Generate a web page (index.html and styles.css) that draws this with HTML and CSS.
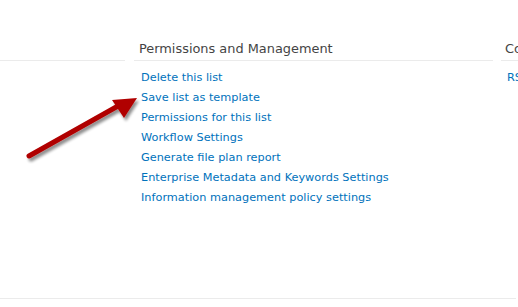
FILE: index.html
```html
<!DOCTYPE html>
<html lang="en">
<head>
    <meta charset="UTF-8">
    <title>List Settings</title>
    <link rel="stylesheet" href="styles.css">
</head>
<body>
    <div class="settings">
        <div class="section section-left">
            <h3 class="section-title">&nbsp;</h3>
        </div>

        <div class="section section-main">
            <h3 class="section-title">Permissions and Management</h3>
            <ul class="link-list">
                <li><a href="#">Delete this list</a></li>
                <li><a href="#">Save list as template</a></li>
                <li><a href="#">Permissions for this list</a></li>
                <li><a href="#">Workflow Settings</a></li>
                <li><a href="#">Generate file plan report</a></li>
                <li><a href="#">Enterprise Metadata and Keywords Settings</a></li>
                <li><a href="#">Information management policy settings</a></li>
            </ul>
        </div>

        <div class="section section-right">
            <h3 class="section-title">Communications</h3>
            <ul class="link-list">
                <li><a href="#">RSS settings</a></li>
            </ul>
        </div>
    </div>

    <div class="footer-rule"></div>

    <!-- callout arrow pointing at "Save list as template" -->
    <svg class="callout-arrow" width="160" height="180" viewBox="0 0 160 180">
        <defs>
            <filter id="arrow-shadow" x="-20%" y="-20%" width="140%" height="140%">
                <feGaussianBlur in="SourceAlpha" stdDeviation="1.6"/>
                <feOffset dx="2" dy="3"/>
                <feComponentTransfer><feFuncA type="linear" slope="0.45"/></feComponentTransfer>
                <feMerge><feMergeNode/><feMergeNode in="SourceGraphic"/></feMerge>
            </filter>
        </defs>
        <g filter="url(#arrow-shadow)" fill="#b00000">
            <line x1="29" y1="156" x2="118" y2="106" stroke="#b00000" stroke-width="5" stroke-linecap="round"/>
            <polygon points="137,98 112,100 124,118"/>
        </g>
    </svg>
</body>
</html>
```

FILE: styles.css
```css
* {
    margin: 0;
    padding: 0;
    box-sizing: border-box;
}

body {
    font-family: "DejaVu Sans", Verdana, sans-serif;
    background: #fff;
    width: 518px;
    height: 307px;
    overflow: hidden;
    position: relative;
}

.settings {
    display: flex;
    gap: 0 9px;
    padding-top: 38px;
}

.section-left {
    width: 125px;
    flex-shrink: 0;
}

.section-main {
    width: 359px;
    flex-shrink: 0;
}

.section-right {
    flex: 1;
    margin-left: -1px;
    white-space: nowrap;
    overflow: hidden;
}

.section-title {
    font-size: 12.9px;
    font-weight: normal;
    color: #444;
    height: 23px;
    line-height: 22px;
    padding-left: 5px;
    border-bottom: 1px solid #ebebeb;
}

.link-list {
    list-style: none;
    padding-top: 7px;
    padding-left: 7px;
}

.link-list li {
    height: 20px;
    line-height: 20px;
    font-size: 11.3px;
}

.link-list a {
    color: #0072bc;
    text-decoration: none;
}

.section-right .section-title {
    padding-left: 4px;
}

.section-right .link-list {
    padding-left: 6px;
}

.footer-rule {
    margin-top: 90px;
    width: 516px;
    border-top: 1px solid #ebebeb;
}

.callout-arrow {
    position: absolute;
    left: 0;
    top: 0;
}
```
